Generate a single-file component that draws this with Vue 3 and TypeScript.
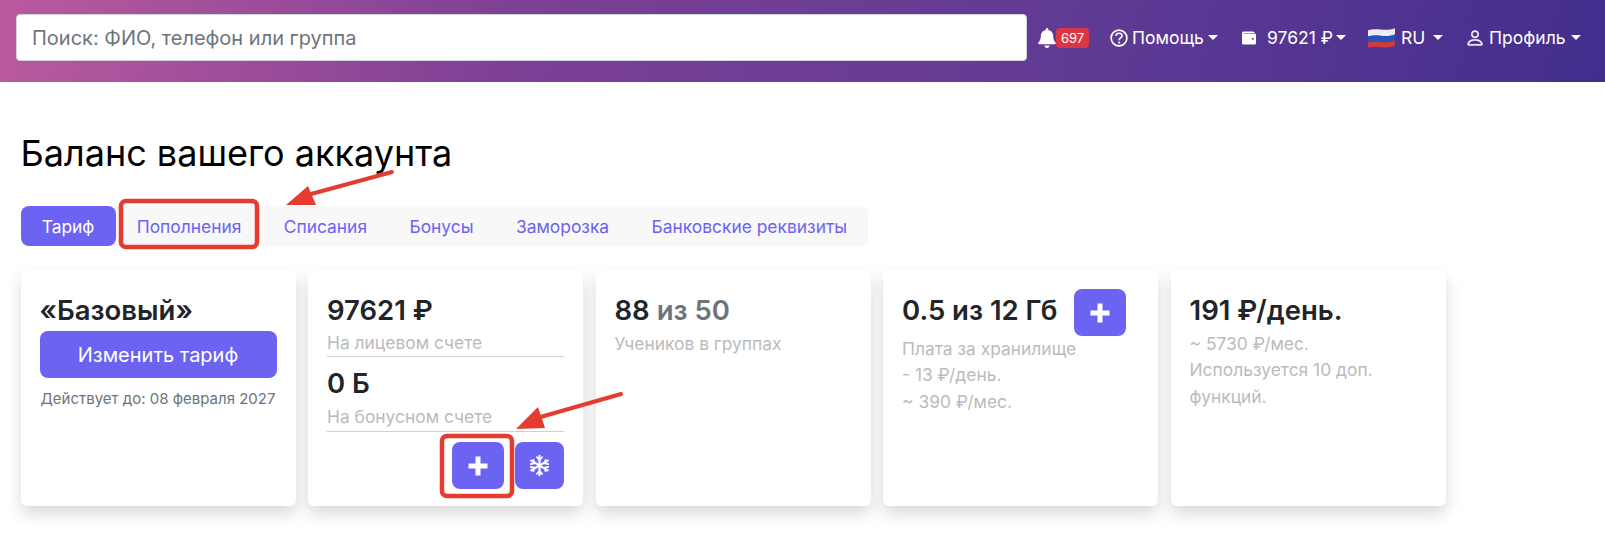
<script setup lang="ts">
const tabs: string[] = ['Пополнения', 'Списания', 'Бонусы', 'Заморозка', 'Банковские реквизиты']
</script>

<template>
  <div class="page">
    <header class="topbar">
      <div class="search">Поиск: ФИО, телефон или группа</div>
      <nav class="menu">
        <span class="item bell-item">
          <svg class="bell" viewBox="0 0 448 512" width="18" height="20"><path fill="#fff" d="M224 512c35 0 64-29 64-64H160c0 35 29 64 64 64zm216-150c-19-21-56-52-56-154 0-78-54-140-128-155V32a32 32 0 0 0-64 0v21C118 68 64 130 64 208c0 102-37 133-56 154-6 6-8 13-8 22 0 18 14 32 32 32h384c18 0 32-14 32-32 0-9-2-16-8-22z"/></svg>
          <span class="badge">697</span>
        </span>
        <span class="item help">
          <svg viewBox="0 0 16 16" width="18" height="18"><circle cx="8" cy="8" r="7" fill="none" stroke="#fff" stroke-width="1.500"/><path d="M5.300 6.100C5.400 4.600 6.500 3.800 8 3.800c1.600 0 2.700 1 2.700 2.200 0 1-.6 1.500-1.400 2-.8.5-1.100.9-1.100 1.700v.3" fill="none" stroke="#fff" stroke-width="1.500"/><circle cx="8.100" cy="12" r="1" fill="#fff"/></svg>
          <span>Помощь</span><i class="caret"></i>
        </span>
        <span class="item wallet">
          <svg viewBox="0 0 16 16" width="16" height="16"><path fill="#fff" d="M2.500 1.500h9.500a1.500 1.500 0 0 1 1.500 1.500H2.500v.6h11A1.500 1.500 0 0 1 15 5v8a1.500 1.500 0 0 1-1.500 1.500h-11A1.500 1.500 0 0 1 1 13V3a1.500 1.500 0 0 1 1.500-1.500z"/><circle cx="11.800" cy="8.800" r="1" fill="#5f3a94"/></svg>
          <span class="wallet-text">97621 ₽</span><i class="caret"></i>
        </span>
        <span class="item lang">
          <svg viewBox="0 0 28 24" width="29" height="25">
            <path fill="#eeeef2" d="M1 5c8-3 17 2 26-2v6c-9 4-18-1-26 2z"/>
            <path fill="#2b52b5" d="M1 11c8-3 17 2 26-2v6c-9 4-18-1-26 2z"/>
            <path fill="#d23a3a" d="M1 17c8-3 17 2 26-2v5c-9 4-18-1-26 2z"/>
          </svg>
          <span class="lang-text">RU</span><i class="caret"></i>
        </span>
        <span class="item profile">
          <svg viewBox="0 0 16 16" width="20" height="20"><path fill="#fff" stroke="#fff" stroke-width="0.300" d="M8 8a3 3 0 1 0 0-6 3 3 0 0 0 0 6zm2-3a2 2 0 1 1-4 0 2 2 0 0 1 4 0zm4 8c0 1-1 1-1 1H3s-1 0-1-1 1-4 6-4 6 3 6 4zm-1 0c0-.2-.2-1-.9-1.700C11.400 10.600 10.100 10 8 10s-3.400.6-4.100 1.300C3.200 12 3 12.800 3 13h10z"/></svg>
          <span>Профиль</span><i class="caret"></i>
        </span>
      </nav>
    </header>

    <main class="content">
      <h1 class="title">Баланс вашего аккаунта</h1>

      <div class="tabs">
        <span class="tab active">Тариф</span>
        <span v-for="t in tabs" :key="t" class="tab">{{ t }}</span>
      </div>

      <section class="cards">
        <article class="card">
          <div class="big">«Базовый»</div>
          <button class="change">Изменить тариф</button>
          <div class="until">Действует до: 08 февраля 2027</div>
        </article>

        <article class="card">
          <div class="big">97621 ₽</div>
          <div class="label ruled">На лицевом счете</div>
          <div class="big second">0 Б</div>
          <div class="label ruled last">На бонусном счете</div>
          <div class="actions">
            <button class="square wide">
              <svg viewBox="0 0 20 20" width="20" height="20"><path fill="#fff" d="M7.500 0.500h5V7.500h7v5H12.500v7h-5V12.500H0.500v-5H7.500z"/></svg>
            </button>
            <button class="square">
              <svg viewBox="0 0 24 24" width="21" height="23" fill="none" stroke="#fff" stroke-width="2.400" stroke-linecap="round" stroke-linejoin="round">
                <path d="M12 1v22M2.500 6.500l19 11M21.500 6.500l-19 11"/>
                <path stroke-width="2" d="M9 2.500l3 3 3-3M9 21.500l3-3 3 3M2 10.500l4-1-1-4M22 10.500l-4-1 1-4M2 13.500l4 1-1 4M22 13.500l-4 1 1 4"/>
              </svg>
            </button>
          </div>
        </article>

        <article class="card">
          <div class="big">88 <span class="muted">из 50</span></div>
          <div class="label lines gap">Учеников в группах</div>
        </article>

        <article class="card">
          <div class="storage">
            <div class="big">0.5 из 12 Гб</div>
            <button class="square wide">
              <svg viewBox="0 0 20 20" width="20" height="20"><path fill="#fff" d="M7.500 0.500h5V7.500h7v5H12.500v7h-5V12.500H0.500v-5H7.500z"/></svg>
            </button>
          </div>
          <div class="label lines">Плата за хранилище<br />- 13 ₽/день.<br />~ 390 ₽/мес.</div>
        </article>

        <article class="card">
          <div class="big">191 ₽/день.</div>
          <div class="label lines gap">~ 5730 ₽/мес.<br />Используется 10 доп.<br />функций.</div>
        </article>
      </section>
    </main>

    <svg class="overlay" width="1605" height="539" viewBox="0 0 1605 539" fill="none">
      <rect x="121" y="201" width="136" height="46" rx="5" stroke="#e53b30" stroke-width="4.500"/>
      <rect x="442" y="436" width="70" height="60" rx="5" stroke="#e53b30" stroke-width="4.500"/>
      <path d="M392 172L300 197" stroke="#e53b30" stroke-width="4" stroke-linecap="round"/>
      <path d="M286 205L308 186L316 205Z" fill="#e53b30"/>
      <path d="M621 394L530 420" stroke="#e53b30" stroke-width="4" stroke-linecap="round"/>
      <path d="M516 429L538 407L545 428Z" fill="#e53b30"/>
    </svg>
  </div>
</template>

<style>
html, body { margin: 0; background: #fff; }
</style>

<style scoped>
.page {
  position: relative;
  width: 1605px;
  height: 539px;
  overflow: hidden;
  font-family: Inter, "Noto Sans", sans-serif;
  color: #212529;
}
.topbar {
  height: 82px;
  box-sizing: border-box;
  padding: 14px 16px 0;
  display: flex;
  align-items: flex-start;
  background: linear-gradient(100deg, #bb5a9f 0%, #7d4095 32%, #5f3a94 68%, #432e8d 100%);
}
.search {
  flex: none;
  width: 1011px;
  height: 47px;
  box-sizing: border-box;
  padding: 0 15px;
  display: flex;
  align-items: center;
  background: #fff;
  border: 1px solid #ced4da;
  border-radius: 4px;
  color: #6c757d;
  font-size: 20px;
}
.menu {
  display: flex;
  align-items: center;
  height: 47px;
  color: #fff;
  font-size: 17.500px;
  margin-left: 11px;
}
.item { display: flex; align-items: center; white-space: nowrap; flex: none; }
.bell-item { width: 52px; }
.badge {
  background: #dc3545;
  color: #fff;
  font-size: 13px;
  line-height: 20px;
  padding: 0 5px;
  border-radius: 4px;
}
.help { width: 131px; gap: 4px; margin-left: 20px; }
.wallet { width: 126px; }
.wallet-text { margin-left: 10px; }
.lang { width: 98px; }
.lang-text { margin-left: 5px; }
.profile { gap: 4px; }
.caret {
  display: inline-block;
  border-top: 5px solid #fff;
  border-left: 5px solid transparent;
  border-right: 5px solid transparent;
}
.wallet .caret { margin-left: 3px; }
.lang .caret { margin-left: 8px; }
.profile .caret { margin-left: 2px; }
.content { padding: 0 20.500px; }
.title {
  margin: 50px 0 0;
  font-family: Inter, sans-serif;
  font-weight: 400;
  font-size: 36px;
  line-height: 43px;
  color: #000;
}
.tabs {
  display: inline-flex;
  margin-top: 31px;
  background: #f8f8f8;
  border-radius: 8px;
  height: 40px;
  font-size: 17.400px;
}
.tab {
  display: flex;
  align-items: center;
  padding: 0 21.200px;
  color: #6c63f2;
  white-space: nowrap;
}
.tab.active { background: #6c63f2; color: #fff; border-radius: 8px; }
.cards { display: flex; gap: 12.500px; margin-top: 24px; }
.card {
  width: 275px;
  height: 236px;
  box-sizing: border-box;
  padding: 23px 19px;
  background: #fff;
  border-radius: 6px;
  box-shadow: 0 8px 16px rgba(0, 0, 0, 0.15);
}
.big { font-size: 27.500px; font-weight: 600; line-height: 34px; color: #212529; }
.muted { color: #6c757d; }
.second { margin-top: 9px; }
.change {
  display: block;
  width: 237px;
  height: 47px;
  margin-top: 4px;
  border: 0;
  border-radius: 8px;
  background: #6c63f2;
  color: #fff;
  font: 400 20px Inter, sans-serif;
}
.until { margin-top: 12px; text-align: center; font-size: 15px; line-height: 18px; color: #6c757d; }
.label { font-size: 17.400px; color: #bbb; }
.ruled { border-bottom: 1px solid #d0d0d0; padding-top: 3px; line-height: 26px; }
.ruled.last { line-height: 28px; }
.lines { line-height: 26.300px; }
.gap { margin-top: 4px; }
.actions { display: flex; justify-content: flex-end; gap: 11px; margin-top: 10px; }
.square {
  flex: none;
  width: 49px;
  height: 47px;
  padding: 0;
  display: flex;
  align-items: center;
  justify-content: center;
  border: 0;
  border-radius: 8px;
  background: #6c63f2;
}
.wide { width: 52px; }
.storage { display: flex; align-items: flex-start; gap: 17px; height: 47px; margin-top: -4px; }
.storage .big { padding-top: 4px; white-space: nowrap; }
.overlay { position: absolute; left: 0; top: 0; pointer-events: none; }
</style>
